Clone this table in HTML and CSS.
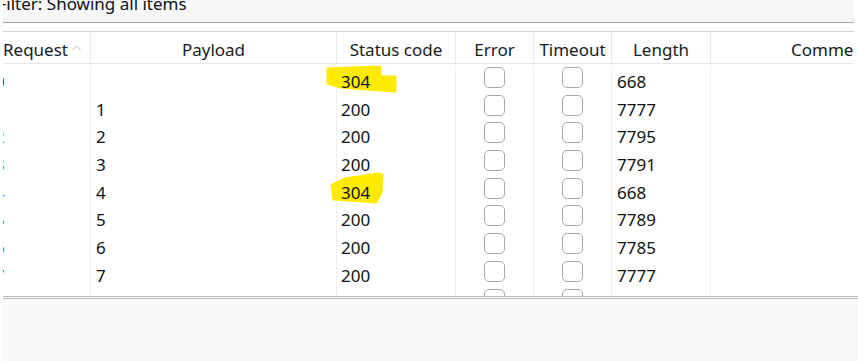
FILE: index.html
```html
<!DOCTYPE html>
<html>
<head>
<meta charset="utf-8">
<link rel="stylesheet" href="styles.css">
</head>
<body>
<div class="app">
  <div class="top">
    <div class="filter"><span class="filter-text">Filter: Showing all items</span></div>
    <div class="spacer"></div>
  </div>
  <div class="table">
    <div class="head">
      <div class="hc c-req"><span class="req-label">Request</span>
        <svg class="sort" width="9" height="6" viewBox="0 0 9 6"><path d="M0.5 5 L4.5 1 L8.5 5" fill="none" stroke="#b4b4b4" stroke-width="1"/></svg>
      </div>
      <div class="hc c-pay">Payload</div>
      <div class="hc c-st">Status code</div>
      <div class="hc c-err">Error</div>
      <div class="hc c-to">Timeout</div>
      <div class="hc c-len">Length</div>
      <div class="hc c-com">Comment</div>
    </div>
    <div class="body">
      <div class="row">
        <div class="cell c-req"><span class="req-num dark">0</span></div>
        <div class="cell c-pay"></div>
        <div class="cell c-st"><svg class="mark" width="80" height="40" viewBox="0 0 80 40"><path d="M3 8 L55 6 L55 16 L70 16 L70 30 L15 26 L3 22 Z" fill="#ffea00" stroke="#ffea00" stroke-width="3" stroke-linejoin="round"/></svg><span class="val">304</span></div>
        <div class="cell c-err"><span class="cb"></span></div>
        <div class="cell c-to"><span class="cb"></span></div>
        <div class="cell c-len">668</div>
        <div class="cell c-com"></div>
      </div>
      <div class="row">
        <div class="cell c-req"><span class="req-num">1</span></div>
        <div class="cell c-pay">1</div>
        <div class="cell c-st">200</div>
        <div class="cell c-err"><span class="cb"></span></div>
        <div class="cell c-to"><span class="cb"></span></div>
        <div class="cell c-len">7777</div>
        <div class="cell c-com"></div>
      </div>
      <div class="row">
        <div class="cell c-req"><span class="req-num">2</span></div>
        <div class="cell c-pay">2</div>
        <div class="cell c-st">200</div>
        <div class="cell c-err"><span class="cb"></span></div>
        <div class="cell c-to"><span class="cb"></span></div>
        <div class="cell c-len">7795</div>
        <div class="cell c-com"></div>
      </div>
      <div class="row">
        <div class="cell c-req"><span class="req-num">3</span></div>
        <div class="cell c-pay">3</div>
        <div class="cell c-st">200</div>
        <div class="cell c-err"><span class="cb"></span></div>
        <div class="cell c-to"><span class="cb"></span></div>
        <div class="cell c-len">7791</div>
        <div class="cell c-com"></div>
      </div>
      <div class="row">
        <div class="cell c-req"><span class="req-num">4</span></div>
        <div class="cell c-pay">4</div>
        <div class="cell c-st"><svg class="mark" width="80" height="40" viewBox="0 0 80 40"><path d="M7 13 L20 7 L53 2 L57 3 L56 20 L51 30 L9 27 Z" fill="#ffea00" stroke="#ffea00" stroke-width="3" stroke-linejoin="round"/></svg><span class="val">304</span></div>
        <div class="cell c-err"><span class="cb"></span></div>
        <div class="cell c-to"><span class="cb"></span></div>
        <div class="cell c-len">668</div>
        <div class="cell c-com"></div>
      </div>
      <div class="row">
        <div class="cell c-req"><span class="req-num">5</span></div>
        <div class="cell c-pay">5</div>
        <div class="cell c-st">200</div>
        <div class="cell c-err"><span class="cb"></span></div>
        <div class="cell c-to"><span class="cb"></span></div>
        <div class="cell c-len">7789</div>
        <div class="cell c-com"></div>
      </div>
      <div class="row">
        <div class="cell c-req"><span class="req-num">6</span></div>
        <div class="cell c-pay">6</div>
        <div class="cell c-st">200</div>
        <div class="cell c-err"><span class="cb"></span></div>
        <div class="cell c-to"><span class="cb"></span></div>
        <div class="cell c-len">7785</div>
        <div class="cell c-com"></div>
      </div>
      <div class="row">
        <div class="cell c-req"><span class="req-num">7</span></div>
        <div class="cell c-pay">7</div>
        <div class="cell c-st">200</div>
        <div class="cell c-err"><span class="cb"></span></div>
        <div class="cell c-to"><span class="cb"></span></div>
        <div class="cell c-len">7777</div>
        <div class="cell c-com"></div>
      </div>
      <div class="row">
        <div class="cell c-req"><span class="req-num">8</span></div>
        <div class="cell c-pay">8</div>
        <div class="cell c-st">200</div>
        <div class="cell c-err"><span class="cb"></span></div>
        <div class="cell c-to"><span class="cb"></span></div>
        <div class="cell c-len">7777</div>
        <div class="cell c-com"></div>
      </div>
    </div>
  </div>
  <div class="sep"></div>
  <div class="panel"></div>
</div>
</body>
</html>
```

FILE: styles.css
```css
html, body {
  margin: 0;
  padding: 0;
  background: #ffffff;
}
body {
  width: 858px;
  height: 361px;
  overflow: hidden;
  font-family: "Noto Sans", "Open Sans", sans-serif;
  font-size: 17px;
  color: #111;
}
.app {
  padding-left: 3px;
  display: flex;
  flex-direction: column;
  height: 361px;
}
.top {
  width: 851px;
}
.filter {
  height: 22px;
  background: #f7f7f7;
  border-bottom: 1px solid #a6a6a6;
  overflow: hidden;
  position: relative;
}
.filter-text {
  display: block;
  margin-left: -5.5px;
  margin-top: -7px;
  line-height: 22px;
  color: #111;
  white-space: nowrap;
}
.spacer {
  height: 8px;
  border-bottom: 1px solid #d2d2d2;
}
.table {
  width: 851px;
  height: 264px;
  overflow: hidden;
}
.head, .row {
  display: grid;
  grid-template-columns: 88px 246px 119px 78px 78px 99px 240px;
  width: 948px;
}
.head {
  height: 31px;
  border-bottom: 1px solid #e6e6e6;
}
.hc {
  border-right: 1px solid #e8e8e8;
  display: flex;
  align-items: center;
  justify-content: center;
  color: #1a1a1a;
  white-space: nowrap;
  padding-top: 3px;
  box-sizing: border-box;
}
.hc.c-req {
  justify-content: flex-start;
  gap: 4px;
}
.sort {
  margin-top: -3px;
}
.body {
  padding-top: 2px;
}
.row {
  height: 27.7px;
}
.cell {
  border-right: 1px solid #f0f0f0;
  display: flex;
  align-items: center;
  padding-left: 5px;
  line-height: 27.7px;
  padding-top: 2px;
  box-sizing: border-box;
  white-space: nowrap;
  position: relative;
}
.cell.c-req {
  padding-left: 0;
  overflow: hidden;
}
.req-num {
  margin-left: -8px;
  color: #3a78c4;
}
.req-num.dark {
  color: #333;
}
.cell.c-st {
  padding-left: 4px;
}
.cell.c-err, .cell.c-to {
  justify-content: center;
  align-items: flex-start;
  padding-left: 0;
  padding-top: 1px;
}
.cell.c-len {
  padding-left: 5px;
}
.cb {
  display: block;
  width: 19px;
  height: 19px;
  border: 1.5px solid #a8a8a8;
  border-radius: 5px;
  background: #fff;
}
.mark {
  position: absolute;
  left: -12px;
  top: -5px;
}
.val {
  position: relative;
}
.sep {
  width: 855px;
  height: 1px;
  border-top: 1px solid #bdb5b9;
  border-bottom: 1px solid #bdb5b9;
}
.panel {
  flex: 1;
  background: #fafafa;
}
```
